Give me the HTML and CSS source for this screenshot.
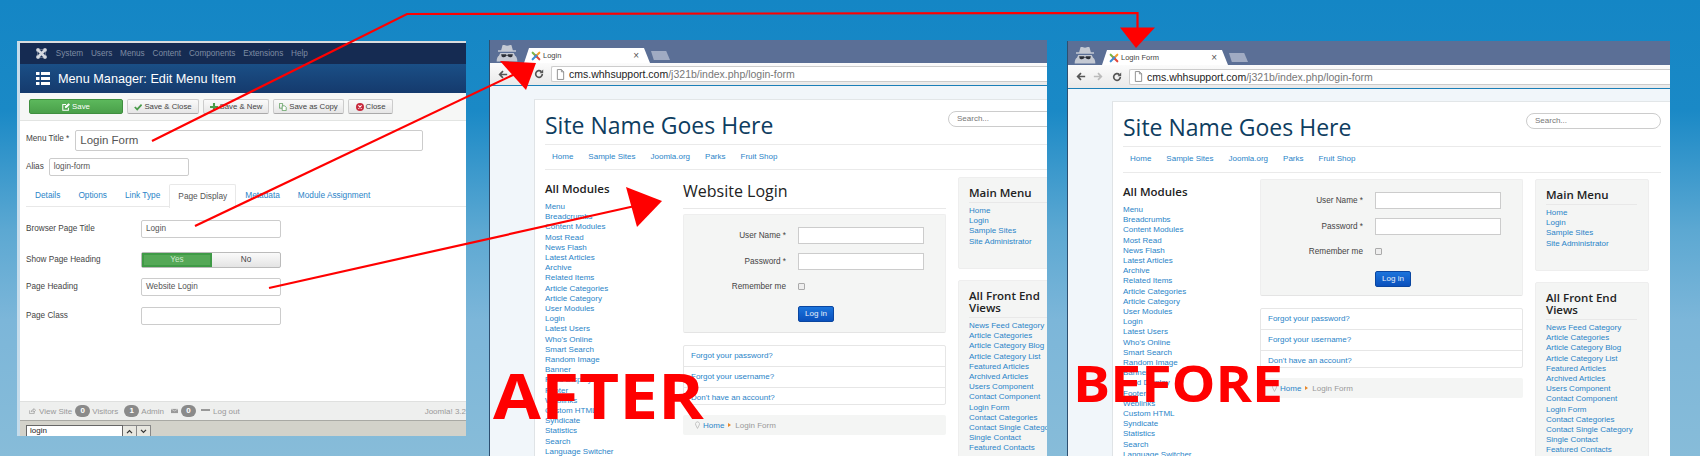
FILE: index.html
```html
<!doctype html>
<html lang="en">
  <head>
    <meta charset="utf-8">
    <title>Login page, before and after</title>
    <link rel="stylesheet" href="styles.css">
  </head>
  <body>
    <svg width="0" height="0" class="defs">
      <symbol id="joomla" viewBox="0 0 24 24">
        <path d="M6 6l12 12M18 6L6 18" fill="none" stroke-width="5.500"/>
        <path d="M8 3.500h8M8 20.500h8M3.500 8v8M20.500 8v8" fill="none" stroke-width="1.500" opacity=".6"/>
        <circle cx="4.500" cy="4.500" r="3.800"/><circle cx="19.500" cy="4.500" r="3.800"/><circle cx="4.500" cy="19.500" r="3.800"/><circle cx="19.500" cy="19.500" r="3.800"/>
      </symbol>
      <symbol id="favicon" viewBox="0 0 24 24">
        <g fill="none" stroke-width="5" stroke-linecap="round">
          <path d="M4 4l9 9" stroke="#7ab648"/><path d="M20 4l-9 9" stroke="#f2a02d"/>
          <path d="M20 20l-9-9" stroke="#e2463c"/><path d="M4 20l9-9" stroke="#3f8fd6"/>
        </g>
      </symbol>
      <symbol id="incognito" viewBox="0 0 24 20">
        <path fill="#c4c9d3" d="M7 1.500c1.500-1 3 .4 5 .4s3.500-1.400 5-.4l1.500 5.500H22v1.500H2V7h3.500zM4.500 10h15l1.500 3c1.500 1 2.500 3 2.500 6.500H.5C.5 16 1.500 14 3 13z"/>
        <path fill="#2b2f38" d="M5.500 11.500h5.500l.5 1h1l.5-1h5.500l-.6 2.500c-.5 1-3.500 1.200-4.500 0l-.6-1h-1.600l-.6 1c-1 1.200-4 1-4.500 0z"/>
      </symbol>
      <symbol id="page" viewBox="0 0 10 12">
        <path d="M1.500.5h4.500l2.500 2.500v8.500h-7zM6 .5V3h2.500" fill="#fff" stroke="#888"/>
      </symbol>
      <symbol id="reload" viewBox="0 0 12 12">
        <path d="M10 6a4 4 0 1 1-1.200-2.900" fill="none" stroke="#555" stroke-width="2"/><path d="M11 .6v4.400H6.600z" fill="#555"/>
      </symbol>
      <symbol id="pin" viewBox="0 0 8 12">
        <path d="M4 11.500L1.200 6a3.300 3.300 0 1 1 5.600 0z" fill="none" stroke="#aaa"/>
      </symbol>
    </svg>

    <section class="admin">
      <nav class="admin-nav">
        <svg class="joomla-mark"><use href="#joomla"/></svg>
        <a>System</a><a>Users</a><a>Menus</a><a>Content</a><a>Components</a><a>Extensions</a><a>Help</a>
      </nav>
      <header class="admin-head">
        <svg class="list-icon" viewBox="0 0 14 13"><path d="M0 0h3.500v3H0zM5 0h9v3H5zM0 5h3.500v3H0zM5 5h9v3H5zM0 10h3.500v3H0zM5 10h9v3H5z"/></svg>
        <h1>Menu Manager: Edit Menu Item</h1>
      </header>
      <div class="admin-tools">
        <button class="tool tool-save">
          <svg class="tool-icon" viewBox="0 0 10 10"><path d="M8 6v3H1V2h4" fill="none" stroke="#fff" stroke-width="1.300"/><path d="M3.500 4.500l.6 2 2-.6L10 2 8.200.3z" fill="#fff"/></svg>Save
        </button>
        <button class="tool tool-close-save">
          <svg class="tool-icon" viewBox="0 0 10 10"><path d="M1 5l3 3 5.500-6" fill="none" stroke="#4a9c4a" stroke-width="2.200"/></svg>Save &amp; Close
        </button>
        <button class="tool tool-new">
          <svg class="tool-icon" viewBox="0 0 10 10"><path d="M3.700 0h2.600v3.700H10v2.600H6.300V10H3.700V6.300H0V3.700h3.700z" fill="#4a9c4a"/></svg>Save &amp; New
        </button>
        <button class="tool tool-copy">
          <svg class="tool-icon" viewBox="0 0 10 10"><path d="M.5.5h4v6h-4z" fill="none" stroke="#5a9c5a"/><path d="M4 3.500h3l2 2v4H4z" fill="#fff" stroke="#5a9c5a"/></svg>Save as Copy
        </button>
        <button class="tool tool-close">
          <svg class="tool-icon" viewBox="0 0 10 10"><circle cx="5" cy="5" r="5" fill="#c8293c"/><path d="M3 3l4 4M7 3L3 7" stroke="#fff" stroke-width="1.400"/></svg>Close
        </button>
      </div>

      <div class="title-row">
        <label>Menu Title *</label>
        <div class="box box-title">Login Form</div>
      </div>
      <div class="alias-row">
        <label>Alias</label>
        <div class="box box-alias">login-form</div>
      </div>

      <div class="admin-tabs">
        <a>Details</a><a>Options</a><a>Link Type</a><a class="active">Page Display</a><a>Metadata</a><a>Module Assignment</a>
      </div>

      <div class="field field-first">
        <label>Browser Page Title</label>
        <div class="box">Login</div>
      </div>
      <div class="field field-toggle">
        <label>Show Page Heading</label>
        <div class="toggle"><span class="on"><i>Yes</i></span><span>No</span></div>
      </div>
      <div class="field field-heading">
        <label>Page Heading</label>
        <div class="box">Website Login</div>
      </div>
      <div class="field field-class">
        <label>Page Class</label>
        <div class="box"></div>
      </div>

      <footer class="admin-foot">
        <svg class="foot-icon" viewBox="0 0 10 8"><path d="M.5 3v4.500h7V5M3 5c0-2 2-3 4-3V.5L9.500 3 7 5.500V4C5.500 4 4 4 3 5z" fill="none" stroke="#999"/></svg>
        <span class="foot-link">View Site</span>
        <b class="count">0</b><span class="foot-link">Visitors</span>
        <b class="count count-admin">1</b><span class="foot-link">Admin</span>
        <svg class="foot-icon foot-mail" viewBox="0 0 10 6"><path d="M0 0h10v6H0z" fill="#999"/><path d="M0 0l5 3 5-3" fill="none" stroke="#eee" stroke-width=".8"/></svg>
        <b class="count">0</b>
        <i class="foot-dash"></i><span class="foot-link">Log out</span>
        <span class="foot-version">Joomla! 3.2</span>
      </footer>
      <div class="find-bar">
        <div class="find-input">login</div>
        <div class="find-btn"><svg viewBox="0 0 8 6"><path d="M1 5l3-3 3 3" fill="none" stroke="#333" stroke-width="1.500"/></svg></div>
        <div class="find-btn"><svg viewBox="0 0 8 6"><path d="M1 1l3 3 3-3" fill="none" stroke="#333" stroke-width="1.500"/></svg></div>
      </div>
    </section>

    <section class="browser after">
      <div class="tabstrip">
        <svg class="spy"><use href="#incognito"/></svg>
        <div class="tab"><svg class="fav"><use href="#favicon"/></svg><span>Login</span><em>×</em></div>
        <div class="new-tab"></div>
      </div>
      <div class="chrome">
        <svg class="nav-arrow" viewBox="0 0 12 10"><path d="M11 5H2M6 1L2 5l4 4" fill="none" stroke="#555" stroke-width="2"/></svg>
        <svg class="nav-arrow nav-forward" viewBox="0 0 12 10"><path d="M1 5h9M6 1l4 4-4 4" fill="none" stroke="#bbb" stroke-width="2"/></svg>
        <svg class="nav-reload"><use href="#reload"/></svg>
        <div class="omnibox"><svg class="omni-page"><use href="#page"/></svg><span class="host">cms.whhsupport.com</span>/j321b/index.php/login-form</div>
      </div>
      <div class="viewport">
        <div class="card">
          <div class="site-head">
            <div class="site-name">Site Name Goes Here</div>
            <div class="search">Search...</div>
          </div>
          <div class="site-nav"><a>Home</a><a>Sample Sites</a><a>Joomla.org</a><a>Parks</a><a>Fruit Shop</a></div>
          <div class="site-body">
            <aside class="col-left">
              <h3>All Modules</h3>
              <ul class="links">
                <li>Menu</li><li>Breadcrumbs</li><li>Content Modules</li><li>Most Read</li><li>News Flash</li><li>Latest Articles</li><li>Archive</li><li>Related Items</li><li>Article Categories</li><li>Article Category</li><li>User Modules</li><li>Login</li><li>Latest Users</li><li>Who's Online</li><li>Smart Search</li><li>Random Image</li><li>Banner</li><li>Feed Display</li><li>Footer</li><li>Weblinks</li><li>Custom HTML</li><li>Syndicate</li><li>Statistics</li><li>Search</li><li>Language Switcher</li>
              </ul>
            </aside>
            <main class="col-main">
              <h2 class="page-heading">Website Login</h2>
              <form class="login">
                <div class="login-row"><label>User Name *</label><div class="login-box"></div></div>
                <div class="login-row"><label>Password *</label><div class="login-box"></div></div>
                <div class="login-row login-remember"><label>Remember me</label><i class="check"></i></div>
                <div class="login-row login-submit"><label></label><div class="login-btn">Log in</div></div>
              </form>
              <div class="help-links">
                <a>Forgot your password?</a><a>Forgot your username?</a><a>Don't have an account?</a>
              </div>
              <div class="crumbs"><svg class="crumb-pin"><use href="#pin"/></svg><a>Home</a><i class="crumb-arrow"></i><span>Login Form</span></div>
            </main>
            <aside class="col-right">
              <div class="well well-menu">
                <h3>Main Menu</h3>
                <ul class="links"><li>Home</li><li>Login</li><li>Sample Sites</li><li>Site Administrator</li></ul>
              </div>
              <div class="well">
                <h3>All Front End Views</h3>
                <ul class="links">
                  <li>News Feed Category</li><li>Article Categories</li><li>Article Category Blog</li><li>Article Category List</li><li>Featured Articles</li><li>Archived Articles</li><li>Users Component</li><li>Contact Component</li><li>Login Form</li><li>Contact Categories</li><li>Contact Single Category</li><li>Single Contact</li><li>Featured Contacts</li><li>User Profile</li>
                </ul>
              </div>
            </aside>
          </div>
        </div>
      </div>
    </section>

    <section class="browser before">
      <div class="tabstrip">
        <svg class="spy"><use href="#incognito"/></svg>
        <div class="tab"><svg class="fav"><use href="#favicon"/></svg><span>Login Form</span><em>×</em></div>
        <div class="new-tab"></div>
      </div>
      <div class="chrome">
        <svg class="nav-arrow" viewBox="0 0 12 10"><path d="M11 5H2M6 1L2 5l4 4" fill="none" stroke="#555" stroke-width="2"/></svg>
        <svg class="nav-arrow nav-forward" viewBox="0 0 12 10"><path d="M1 5h9M6 1l4 4-4 4" fill="none" stroke="#bbb" stroke-width="2"/></svg>
        <svg class="nav-reload"><use href="#reload"/></svg>
        <div class="omnibox"><svg class="omni-page"><use href="#page"/></svg><span class="host">cms.whhsupport.com</span>/j321b/index.php/login-form</div>
      </div>
      <div class="viewport">
        <div class="card">
          <div class="site-head">
            <div class="site-name">Site Name Goes Here</div>
            <div class="search">Search...</div>
          </div>
          <div class="site-nav"><a>Home</a><a>Sample Sites</a><a>Joomla.org</a><a>Parks</a><a>Fruit Shop</a></div>
          <div class="site-body">
            <aside class="col-left">
              <h3>All Modules</h3>
              <ul class="links">
                <li>Menu</li><li>Breadcrumbs</li><li>Content Modules</li><li>Most Read</li><li>News Flash</li><li>Latest Articles</li><li>Archive</li><li>Related Items</li><li>Article Categories</li><li>Article Category</li><li>User Modules</li><li>Login</li><li>Latest Users</li><li>Who's Online</li><li>Smart Search</li><li>Random Image</li><li>Banner</li><li>Feed Display</li><li>Footer</li><li>Weblinks</li><li>Custom HTML</li><li>Syndicate</li><li>Statistics</li><li>Search</li><li>Language Switcher</li>
              </ul>
            </aside>
            <main class="col-main">
              <form class="login">
                <div class="login-row"><label>User Name *</label><div class="login-box"></div></div>
                <div class="login-row"><label>Password *</label><div class="login-box"></div></div>
                <div class="login-row login-remember"><label>Remember me</label><i class="check"></i></div>
                <div class="login-row login-submit"><label></label><div class="login-btn">Log in</div></div>
              </form>
              <div class="help-links">
                <a>Forgot your password?</a><a>Forgot your username?</a><a>Don't have an account?</a>
              </div>
              <div class="crumbs"><svg class="crumb-pin"><use href="#pin"/></svg><a>Home</a><i class="crumb-arrow"></i><span>Login Form</span></div>
            </main>
            <aside class="col-right">
              <div class="well well-menu">
                <h3>Main Menu</h3>
                <ul class="links"><li>Home</li><li>Login</li><li>Sample Sites</li><li>Site Administrator</li></ul>
              </div>
              <div class="well">
                <h3>All Front End Views</h3>
                <ul class="links">
                  <li>News Feed Category</li><li>Article Categories</li><li>Article Category Blog</li><li>Article Category List</li><li>Featured Articles</li><li>Archived Articles</li><li>Users Component</li><li>Contact Component</li><li>Login Form</li><li>Contact Categories</li><li>Contact Single Category</li><li>Single Contact</li><li>Featured Contacts</li><li>User Profile</li>
                </ul>
              </div>
            </aside>
          </div>
        </div>
      </div>
    </section>

    <!-- red annotations drawn over the screenshots -->
    <svg class="arrows" viewBox="0 0 1700 456">
      <g fill="none" stroke="#f00" stroke-width="2.200">
        <path d="M152 141L407 14 1137.500 13V30"/>
        <path d="M195 226L515 74"/>
        <path d="M269 288L635 206"/>
      </g>
      <g fill="#f00">
        <path d="M1120 27.500h35L1136 48z"/>
        <path d="M500 61l36 2-10 27z"/>
        <path d="M626 187l36 14-25 26z"/>
      </g>
    </svg>
    <div class="stamp stamp-after">AFTER</div>
    <div class="stamp stamp-before">BEFORE</div>
  </body>
</html>
```

FILE: styles.css
```css
html, body { margin: 0; padding: 0; height: 100%; overflow: hidden; }
body {
  position: relative;
  font-family: "Liberation Sans", Arial, sans-serif;
  font-size: 8px;
  color: #444;
  background: linear-gradient(#1486c5 0, #1a89c6 110px, #5ca8d2 230px, #7cb6d9 320px, #87bcd9 456px);
}
ul { list-style: none; margin: 0; padding: 0; }
h1, h2, h3 { margin: 0; font-weight: normal; }
.defs { position: absolute; }

/* admin window */
.admin {
  position: absolute;
  left: 17px;
  top: 41px;
  width: 449px;
  height: 395px;
  box-sizing: border-box;
  border-left: 3px solid #c5dceb;
  border-top: 2px solid #d8dcdf;
  background: #fff;
  display: flex;
  flex-direction: column;
}
.admin-nav {
  height: 21px;
  flex: none;
  background: #152b52;
  display: flex;
  align-items: center;
  gap: 7.800px;
  padding-left: 16px;
  font-size: 8.200px;
  color: #7e8ba3;
}
.joomla-mark { width: 11px; height: 11px; fill: #d5d9e0; stroke: #d5d9e0; margin-right: 1px; }
.admin-head {
  height: 29px;
  flex: none;
  box-sizing: border-box;
  background: linear-gradient(#1a4f86, #153a6d);
  display: flex;
  align-items: center;
  padding-left: 16px;
  color: #fff;
}
.list-icon { width: 14px; height: 13px; fill: #fff; margin-right: 8px; }
.admin-head h1 { font-size: 12.700px; }
.admin-tools {
  height: 28px;
  flex: none;
  box-sizing: border-box;
  background: #f6f7f6;
  border-bottom: 1px solid #e2e4e2;
  display: flex;
  gap: 4px;
  padding: 6px 0 0 9px;
}
.tool {
  height: 15px;
  padding: 0;
  font: 7.800px "Liberation Sans", Arial, sans-serif;
  color: #444;
  border: 1px solid #ccc;
  border-bottom-color: #aaa;
  border-radius: 2px;
  background: linear-gradient(#fafafa, #e6e6e6);
  display: flex;
  align-items: center;
  justify-content: center;
}
.tool-icon { width: 8px; height: 8px; margin-right: 2px; flex: none; }
.tool-save { width: 94px; color: #fff; border-color: #3f8f3f; background: linear-gradient(#5cb85c, #4aa04a); }
.tool-close-save { width: 72px; }
.tool-new { width: 66px; }
.tool-copy { width: 71px; }
.tool-close { width: 45px; }
.title-row, .alias-row { display: flex; align-items: center; padding-left: 6px; }
.title-row { margin-top: 9px; gap: 6px; }
.alias-row { margin-top: 7px; gap: 5px; }
.title-row label { margin-top: -4px; }
.alias-row label { margin-top: -2px; }
label { font-size: 8.200px; color: #444; }
.box {
  box-sizing: border-box;
  width: 140px;
  height: 18px;
  line-height: 16px;
  padding-left: 4px;
  border: 1px solid #ccc;
  border-radius: 2px;
  background: #fff;
  font-size: 8.200px;
  color: #555;
}
.box-title { width: 348px; height: 21px; line-height: 19px; font-size: 11.500px; }
.admin-tabs {
  height: 23px;
  flex: none;
  box-sizing: border-box;
  margin: 8px 0 0 6px;
  display: flex;
  border-bottom: 1px solid #e8e8e8;
  font-size: 8.300px;
  color: #2a84c8;
}
.admin-tabs a { padding: 0 9px; line-height: 23px; }
.admin-tabs .active {
  height: 23px;
  color: #555;
  background: #fff;
  border: 1px solid #e8e8e8;
  border-bottom: 0;
  border-radius: 2px 2px 0 0;
  padding: 0 8px;
  line-height: 22px;
}
.field { display: flex; align-items: center; padding-left: 6px; }
.field label { width: 115px; flex: none; margin-top: -2px; }
.field-first { margin-top: 13px; }
.field-toggle { margin-top: 14px; }
.field-heading { margin-top: 10px; }
.field-class { margin-top: 11px; }
.toggle {
  box-sizing: border-box;
  width: 140px;
  height: 16px;
  display: flex;
  border: 1px solid #bbb;
  border-radius: 2px;
  background: linear-gradient(#fafafa, #e4e4e4);
  font-size: 8.200px;
  color: #444;
}
.toggle span { flex: 1; text-align: center; line-height: 14px; }
.toggle .on { background: #3f9a46; flex: none; width: 70px; padding: 2px; box-sizing: border-box; color: #cde8cd; line-height: 10px; }
.toggle .on i { display: block; height: 100%; line-height: 10px; font-style: normal; background: #55a857; }
.admin-foot {
  margin-top: auto;
  height: 20px;
  flex: none;
  box-sizing: border-box;
  background: #eeefee;
  border-top: 1px solid #dfe0df;
  border-bottom: 1px solid #a9a9a4;
  display: flex;
  align-items: center;
  padding-left: 9px;
  font-size: 8px;
  color: #999;
}
.foot-icon { width: 7px; height: 6px; margin-right: 3px; }
.foot-mail { margin: 0 3px 0 4px; }
.foot-link { margin-right: 3px; }
.count {
  width: 15px;
  height: 12px;
  border-radius: 6px;
  background: #8a8a8a;
  color: #fff;
  font-weight: bold;
  text-align: center;
  line-height: 12px;
  margin-right: 2px;
  flex: none;
}
.count-admin { margin-left: 3px; }
.foot-dash { width: 9px; height: 2px; margin: 0 3px 3px 3px; background: #999; }
.foot-version { margin-left: auto; white-space: nowrap; }
.find-bar {
  height: 15px;
  flex: none;
  background: #d3d2ca;
  display: flex;
  align-items: flex-end;
  padding-left: 6px;
}
.find-input {
  width: 97px;
  height: 11px;
  box-sizing: border-box;
  background: #fff;
  border: 1px solid #666;
  border-bottom: 0;
  color: #222;
  padding-left: 3px;
  line-height: 10px;
}
.find-btn {
  width: 14px;
  height: 11px;
  box-sizing: border-box;
  border: 1px solid #888;
  border-left: 0;
  border-bottom: 0;
  background: #e8e7e0;
  display: flex;
  align-items: center;
  justify-content: center;
}
.find-btn svg { width: 7px; height: 5px; }

/* browser windows */
.browser {
  position: absolute;
  top: 40px;
  bottom: 0;
  left: 489px;
  width: 558px;
  display: flex;
  flex-direction: column;
  overflow: hidden;
  border-left: 1px solid #2d4f70;
  box-sizing: border-box;
  background: #f1f6fa;
}
.browser.before { left: 1067px; width: 603px; top: 41px; }
.tabstrip {
  height: 23px;
  flex: none;
  background: #5b6f96;
  display: flex;
  align-items: flex-end;
}
.before .tabstrip { height: 24px; }
.spy { width: 22px; height: 18px; margin: 0 6px 1px 6px; flex: none; }
.tab {
  box-sizing: border-box;
  width: 126px;
  height: 15px;
  padding: 0 11px 0 7px;
  background: #fff;
  clip-path: polygon(0 100%, 5px 0, calc(100% - 6px) 0, 100% 100%);
  display: flex;
  align-items: center;
  font-size: 7.500px;
  color: #444;
}
.fav { width: 10px; height: 10px; margin-right: 2px; flex: none; }
.tab em { margin-left: auto; font-style: normal; font-size: 10px; color: #555; }
.new-tab {
  width: 19px;
  height: 9px;
  margin: 0 0 3px 1px;
  background: #a0abc3;
  clip-path: polygon(0 0, 80% 0, 100% 100%, 15% 100%);
}
.chrome {
  height: 23px;
  flex: none;
  box-sizing: border-box;
  background: linear-gradient(#fbfbfb, #e9e9e9);
  border-bottom: 1px solid #1b7fb8;
  display: flex;
  align-items: center;
  padding-left: 8px;
}
.before .chrome { height: 24px; }
.nav-arrow { width: 10px; height: 9px; flex: none; margin-right: 7px; }
.nav-reload { width: 10px; height: 10px; flex: none; margin: 0 7px 0 2px; }
.omnibox {
  flex: 1;
  height: 16px;
  box-sizing: border-box;
  background: #fff;
  border: 1px solid #ccc;
  border-right: 0;
  border-radius: 2px 0 0 2px;
  display: flex;
  align-items: center;
  padding-left: 4px;
  font-size: 10.500px;
  color: #777;
  white-space: nowrap;
}
.omni-page { width: 9px; height: 11px; margin-right: 4px; flex: none; }
.host { color: #222; }
.viewport { flex: 1; padding: 13px 0 0 44px; min-height: 0; }
.before .viewport { padding: 12px 0 0 44px; }
.card {
  width: 560px;
  box-sizing: border-box;
  padding: 0 0 0 10px;
  background: #fff;
  border-left: 1px solid #dfe3e6;
  border-top: 1px solid #e2e6e8;
}
.site-head {
  width: 538px;
  height: 45px;
  box-sizing: border-box;
  display: flex;
  justify-content: space-between;
  align-items: flex-start;
  border-bottom: 1px solid #eaeaea;
}
.site-name {
  font-family: "Open Sans", sans-serif;
  font-size: 23px;
  line-height: 36px;
  margin-top: 7px;
  color: #0e3d60;
}
.search {
  width: 135px;
  height: 16px;
  box-sizing: border-box;
  margin-top: 11px;
  border: 1px solid #ccc;
  border-radius: 8px;
  padding-left: 8px;
  line-height: 14px;
  color: #777;
}
.site-nav {
  width: 538px;
  height: 25px;
  box-sizing: border-box;
  border-bottom: 1px solid #eaeaea;
  display: flex;
  padding-left: 7px;
  gap: 15px;
  line-height: 24px;
  color: #2a84c8;
}
.before .site-nav { height: 26px; }
.site-body {
  width: 538px;
  display: grid;
  grid-template-columns: 138px 263px 126px;
  padding-top: 7px;
}
.before .site-body { padding-top: 6px; grid-template-columns: 137px 263px 126px; }
.links { line-height: 10.200px; color: #2a84c8; white-space: nowrap; }
h3 {
  font-family: "Open Sans", sans-serif;
  font-size: 11.500px;
  font-weight: 600;
  color: #222;
}
.col-left h3 { margin-top: 6px; line-height: 12px; margin-bottom: 7px; }
.before .col-left { margin-top: 1px; }
.col-right { margin-left: 12px; }
.page-heading {
  font-family: "Open Sans", sans-serif;
  font-size: 16px;
  line-height: 28px;
  height: 32px;
  box-sizing: border-box;
  border-bottom: 1px solid #e8e8e8;
  color: #222;
}
.login {
  box-sizing: border-box;
  margin-top: 5px;
  height: 119px;
  padding-top: 12px;
  background: #f4f5f4;
  border: 1px solid #eeeeee;
  border-bottom-color: #e4e4e4;
  border-radius: 2px;
}
.before .login { margin-top: 0; height: 117px; }
.login-row { display: flex; align-items: center; height: 17px; margin-bottom: 9px; }
.login-row label { width: 102px; flex: none; text-align: right; margin-right: 12px; }
.login-box {
  box-sizing: border-box;
  width: 126px;
  height: 17px;
  background: #fff;
  border: 1px solid #ccc;
}
.login-remember { height: 7px; margin: 13px 0 16px; }
.check {
  width: 7px;
  height: 7px;
  box-sizing: border-box;
  border: 1px solid #aaa;
  border-radius: 1px;
  background: #eee;
}
.login-btn {
  width: 36px;
  height: 16px;
  box-sizing: border-box;
  background: linear-gradient(#1b74dc, #0a50bc);
  border: 1px solid #0a46a0;
  border-radius: 2px;
  color: #e8f0fb;
  font-size: 8px;
  text-align: center;
  line-height: 14px;
}
.login-submit { height: 16px; margin: 0; }
.help-links {
  box-sizing: border-box;
  margin-top: 12px;
  height: 60px;
  border: 1px solid #e6e6e6;
  border-radius: 2px;
  display: flex;
  flex-direction: column;
  color: #2a84c8;
}
.help-links a { flex: 1; padding-left: 7px; line-height: 20px; border-bottom: 1px solid #e6e6e6; }
.help-links a:last-child { border-bottom: 0; }
.crumbs {
  height: 20px;
  margin-top: 10px;
  background: #f4f5f4;
  border-radius: 2px;
  display: flex;
  align-items: center;
  padding-left: 12px;
  color: #999;
}
.crumbs a { color: #2a84c8; }
.crumb-pin { width: 5px; height: 8px; margin-right: 3px; }
.crumb-arrow {
  width: 0;
  height: 0;
  margin: 0 4px;
  border-left: 3px solid #e8872a;
  border-top: 2.500px solid transparent;
  border-bottom: 2.500px solid transparent;
}
.well {
  box-sizing: border-box;
  padding: 9px 11px 0 10px;
  background: #f4f5f4;
  border: 1px solid #eeeeee;
  border-radius: 2px;
  min-height: 170px;
}
.well-menu { height: 92px; min-height: 0; margin-bottom: 11px; }
.well h3 { line-height: 12px; padding-bottom: 3px; border-bottom: 1px solid #e8e8e8; margin-bottom: 3px; }

/* overlays */
.arrows { position: absolute; left: 0; top: 0; width: 1700px; height: 456px; pointer-events: none; }
.stamp {
  position: absolute;
  font-family: "Open Sans", sans-serif;
  font-weight: 700;
  color: #f00;
  line-height: 1;
  white-space: nowrap;
  transform-origin: left top;
}
.stamp-after { left: 493px; top: 364px; font-size: 62px; transform: scaleX(1.12); }
.stamp-before { left: 1073px; top: 357px; font-size: 51px; transform: scaleX(1.085); }
```
